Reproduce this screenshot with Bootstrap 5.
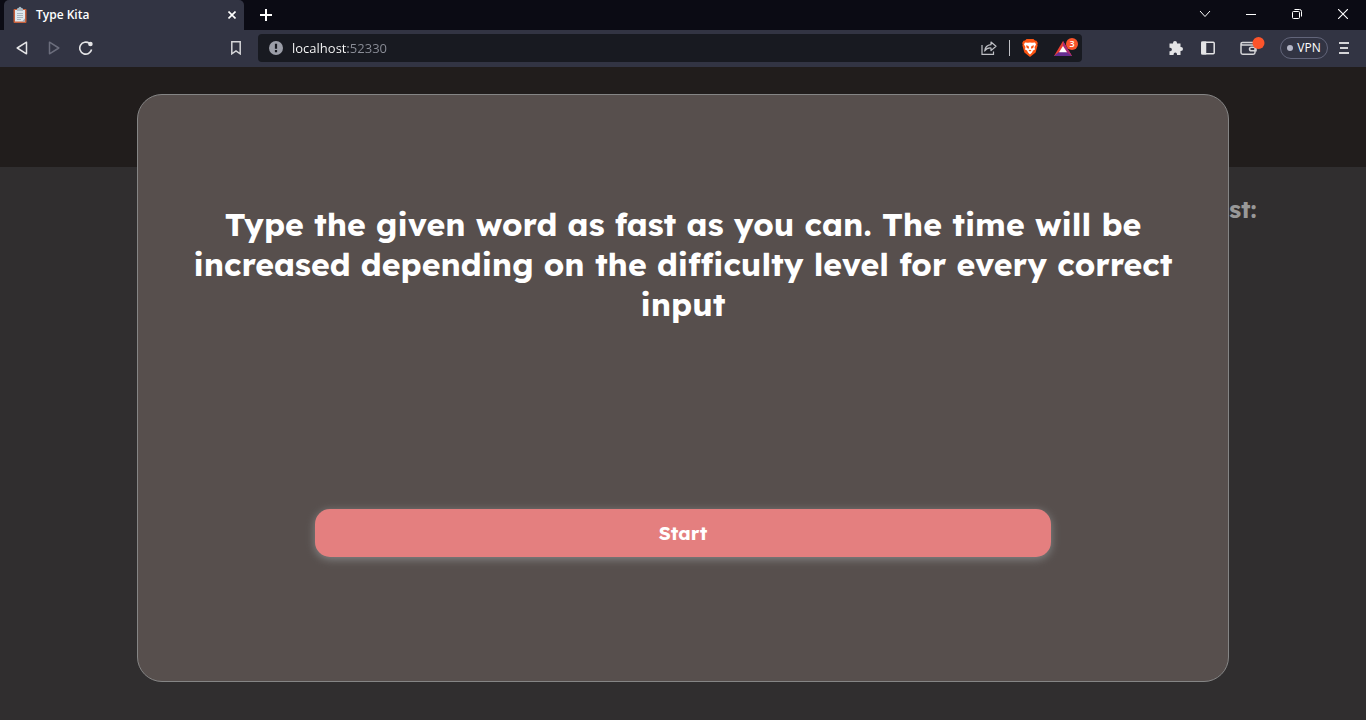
<!DOCTYPE html>
<html lang="en">
<head>
<meta charset="utf-8">
<meta name="viewport" content="width=device-width, initial-scale=1">
<title>Type Kita</title>
<link href="https://cdn.jsdelivr.net/npm/bootstrap@5.3.0/dist/css/bootstrap.min.css" rel="stylesheet">
<style>
  body { font-family: Lexend, Inter, "Open Sans", sans-serif; background: #302e2f; }
  .browser { font-family: "Segoe UI", "Open Sans", sans-serif; color: #fff; font-size: 12px; }
  .browser svg { display: block; flex: none; }
  .tab-strip { background: #0b0b14; height: 30px; padding-left: 4px; }
  .tab-item { background: #323443; width: 240px; padding: 0 4px 0 8px; border-radius: 5px 5px 0 0; }
  .tool-strip { background: #323443; height: 37px; padding-bottom: 1px; }
  .icon-btn { background: none; border: 0; padding: 0; color: #e4e4e6; height: 28px; width: 32px; display: flex; align-items: center; justify-content: center; flex: none; }
  .win-btn { width: 46px; height: 28px; color: #fff; }
  .tab-btn { width: 16px; height: 16px; color: #fff; }
  .side-start { width: 258px; padding: 0 6px; }
  .side-end { width: 284px; padding-right: 6px; }
  .address { background: #181a21; border-radius: 4px; height: 28px; padding-left: 11px; }
  .address input { background: linear-gradient(90deg, #fff 56px, #8b8e98 56px); -webkit-background-clip: text; background-clip: text; color: transparent; border: 0; outline: 0; padding: 0; margin-left: 9px; font-size: 13px; line-height: 20px; }
  .divider { width: 1px; height: 16px; background: #c0c1c6; }
  .vpn { width: 48px; height: 22px; border: 1px solid #62657a; border-radius: 11px; gap: 4px; background: none; color: #fff; padding: 0; flex: none; }
  .vpn-dot { width: 6px; height: 6px; border-radius: 50%; background: #b4b6c6; }
  .top-band { background: #211d1c; height: 100px; }
  .best { color: #989898; font-size: 24px; line-height: 30px; font-weight: 700; padding: 27px 8% 0 0; }
  .overlay { padding-top: 27px; }
  .dialog-box { width: 80%; height: 94%; background: #574f4d; border: 1px solid #858585; border-radius: 25px; padding: 0 4%; color: #fff; }
  .dialog-box h1 { font-size: 32px; line-height: 40px; font-weight: 700; margin: 0; padding-top: 109px; height: 414px; }
  .start-btn, .start-btn:hover { width: 75%; height: 48px; background: #e47f7f; color: #fff; border: 0; border-radius: 15px; font-size: 19px; line-height: 24px; font-weight: 700; box-shadow: 0 2px 10px #888; }
</style>
</head>
<body class="d-flex flex-column vh-100 overflow-hidden">
<header class="browser">
  <div class="tab-strip d-flex justify-content-between">
    <div class="d-flex align-items-stretch">
      <div class="tab-item d-flex align-items-center gap-2">
        <svg width="16" height="18" viewBox="0 0 16 18"><rect x="1.500" y="3" width="13" height="14" rx="1" fill="#c8603c"/><path d="M3 4h10v11.500H3z" fill="#dfe8ee"/><path d="M5 3q0-1 1.500-1Q8-.500 9.500 2 11 2 11 3v2H5z" fill="#a9b9c4"/><path d="M5 7.500h6M5 9.500h6M5 11.500h6M5 13.500h4" stroke="#a8b6c0"/><path d="M10 15.500l3-3v3z" fill="#9cabb5"/></svg>
        <span class="fw-semibold flex-grow-1">Type Kita</span>
        <button class="icon-btn tab-btn" aria-label="Close tab"><svg width="8" height="8" viewBox="0 0 8 8" stroke="currentColor" stroke-width="1.600"><path d="M.5.5l7 7m0-7l-7 7"/></svg></button>
      </div>
      <button class="icon-btn px-3 w-auto align-self-center" aria-label="New tab"><svg width="12" height="12" viewBox="0 0 12 12" stroke="#fff" stroke-width="2"><path d="M6 0v12M0 6h12"/></svg></button>
    </div>
    <div class="d-flex">
      <button class="icon-btn win-btn" aria-label="Search tabs"><svg width="12" height="8" viewBox="0 0 12 8" fill="none" stroke="currentColor"><path d="M1 1l5 5.500L11 1"/></svg></button>
      <button class="icon-btn win-btn" aria-label="Minimize"><svg width="10" height="10" viewBox="0 0 10 10" stroke="currentColor"><path d="M0 5.500h10"/></svg></button>
      <button class="icon-btn win-btn" aria-label="Restore"><svg width="10" height="10" viewBox="0 0 10 10" fill="none" stroke="currentColor"><rect x=".5" y="2.500" width="7" height="7" rx="1"/><path d="M2.500.5h5q2 0 2 2v5"/></svg></button>
      <button class="icon-btn win-btn" aria-label="Close"><svg width="10" height="10" viewBox="0 0 10 10" stroke="currentColor" stroke-width="1.100"><path d="M0 0l10 10M10 0L0 10"/></svg></button>
    </div>
  </div>
  <div class="tool-strip d-flex align-items-center">
    <div class="side-start d-flex justify-content-between flex-shrink-0">
      <div class="d-flex">
        <button class="icon-btn" aria-label="Back"><svg width="12" height="14" viewBox="0 0 12 14" fill="none" stroke="currentColor" stroke-width="1.500" stroke-linejoin="round"><path d="M10.500 1.200v11.600L1.200 7z"/></svg></button>
        <button class="icon-btn" aria-label="Forward" disabled><svg width="12" height="14" viewBox="0 0 12 14" fill="none" stroke="#6b6d7c" stroke-width="1.500" stroke-linejoin="round"><path d="M1.500 1.200v11.600L10.800 7z"/></svg></button>
        <button class="icon-btn" aria-label="Reload"><svg width="14" height="14" viewBox="0 0 14 14" fill="none" stroke="currentColor" stroke-width="1.600"><path d="M12.600 8.500A6 6 0 1 1 10.500 2.400"/><circle cx="11.400" cy="3" r="2.300" fill="currentColor" stroke="none"/></svg></button>
      </div>
      <button class="icon-btn" aria-label="Bookmark"><svg width="12" height="14" viewBox="0 0 12 14" fill="none" stroke="#d5d5d8" stroke-width="1.500"><path d="M1.800.8h8.400v12L6 9.800 1.800 12.800z"/></svg></button>
    </div>
    <div class="address d-flex align-items-center flex-grow-1">
      <svg width="14" height="14" viewBox="0 0 14 14"><circle cx="7" cy="7" r="7" fill="#9b9ea8"/><path d="M5.900 2.800h2.200v5H5.900zM5.900 9h2.200v2.200H5.900z" fill="#181a21"/></svg>
      <input class="flex-grow-1" type="text" aria-label="Address" value="localhost:52330">
      <button class="icon-btn" aria-label="Share"><svg width="16" height="14" viewBox="0 0 16 14" fill="none" stroke="#bfc0c5" stroke-width="1.200"><path d="M1 4v9.300h11.500V10.500"/><path d="M10 1l5 4.300-5 4.300V7Q6 6.500 3.700 10 4.200 4.200 10 3.700z" stroke-linejoin="round"/></svg></button>
      <span class="divider ms-1"></span>
      <button class="icon-btn ms-1 me-1" aria-label="Shields"><svg width="16" height="18" viewBox="0 0 16 18"><path d="M4.500 0h7l1.400 1.600 1.600.1L15.800 4l-.5 1.500.3 1-2 7L8 18l-5.600-4.500-2-7 .3-1L.2 4l1.300-2.300 1.600-.1z" fill="#fb5412"/><path d="M3 3.400l3 .4 2-.4 2 .4 3-.4 1 2-1.500 2.500.5 2.500-2 1.200-1 2L8 15.500l-2-1.900-1-2-2-1.200.5-2.500L2 5.400z" fill="#fff"/><path d="M4 6.300l2.500.7.6 2-.8.7-1.600-1zM12 6.300l-2.500.7-.6 2 .8.7 1.600-1zM6.500 11.500L8 10.800l1.500.7L8 12.600z" fill="#fb5412"/></svg></button>
      <button class="icon-btn" aria-label="Rewards"><svg width="24" height="20" viewBox="0 0 24 20"><path d="M9 3L0 18h18z" fill="#ec3f32"/><path d="M0 18l5-4h8l5 4z" fill="#652d91"/><path d="M9 3l9 15-5-4-4-6z" fill="#a52a7a"/><path d="M9 8l-4 6.200h8z" fill="#fff"/><circle cx="18" cy="6" r="6" fill="#fb542b"/><text x="18" y="9" text-anchor="middle" font-size="9" font-weight="600" fill="#fff">3</text></svg></button>
    </div>
    <div class="side-end d-flex align-items-center justify-content-end flex-shrink-0">
      <button class="icon-btn" aria-label="Extensions"><svg width="16" height="16" viewBox="0 0 16 16" fill="currentColor"><path d="M1.500 3.500H5V3a2 2 0 0 1 4 0v.5h3.500V7h.5a2 2 0 0 1 0 4h-.5v4H9v-.700a1.700 1.700 0 0 0-3.400 0V15H1.500v-3.800h.700a1.700 1.700 0 0 0 0-3.400h-.700z"/></svg></button>
      <button class="icon-btn me-2" aria-label="Sidebar"><svg width="14" height="14" viewBox="0 0 14 14" fill="none" stroke="currentColor" stroke-width="1.500"><rect x=".8" y="1.200" width="12.400" height="11.600" rx="1"/><path d="M1 1.200h3.500v11.600H1z" fill="currentColor"/></svg></button>
      <button class="icon-btn ms-1 me-2" aria-label="Wallet"><svg width="25" height="22" viewBox="0 0 25 22" fill="none" stroke="#d5d5d8" stroke-width="1.500"><path d="M15 8H2.500Q1 8 1 6.800T2.500 5.500H13M1 6.800v8.700q0 1.700 1.700 1.700h10.600q1.700 0 1.700-1.700V8"/><path d="M16 10.200h-4.500q-2 0-2 1.800t2 1.800H16z"/><circle cx="18.500" cy="6" r="6" fill="#fb542b" stroke="none"/></svg></button>
      <button class="vpn ms-1 d-flex align-items-center justify-content-center"><span class="vpn-dot"></span>VPN</button>
      <button class="icon-btn" aria-label="Menu"><svg width="10" height="12" viewBox="0 0 10 12" stroke="#d5d5d8" stroke-width="2"><path d="M0 1h10M1 6h8M0 11h10"/></svg></button>
    </div>
  </div>
</header>
<main class="position-relative flex-grow-1">
  <div class="top-band"></div>
  <div class="best text-end">st:</div>
  <div class="overlay position-absolute top-0 start-0 w-100 h-100 d-flex align-items-start justify-content-center">
    <section class="dialog-box d-flex flex-column align-items-center text-center" role="dialog" aria-labelledby="intro">
      <h1 id="intro">Type the given word as fast as you can. The time will be increased depending on the difficulty level for every correct input</h1>
      <button class="btn start-btn">Start</button>
    </section>
  </div>
</main>
<script src="https://cdn.jsdelivr.net/npm/bootstrap@5.3.0/dist/js/bootstrap.bundle.min.js"></script>
</body>
</html>
